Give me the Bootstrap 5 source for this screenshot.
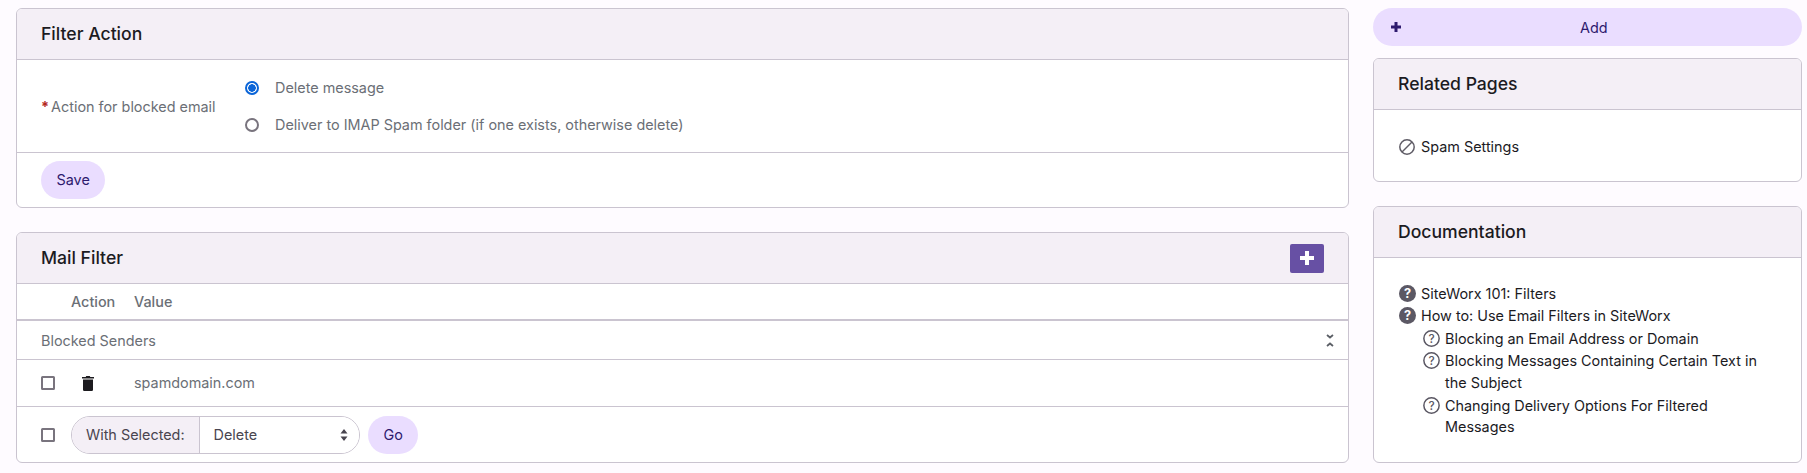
<!DOCTYPE html>
<html lang="en">
<head>
  <meta charset="UTF-8">
  <meta name="viewport" content="width=device-width, initial-scale=1">
  <title>Mail Filter</title>
  <link href="https://cdn.jsdelivr.net/npm/bootstrap@5.3.3/dist/css/bootstrap.min.css" rel="stylesheet">
  <style>
    html, body { height: 473px; }
    body {
      background-color: #fefbff;
      color: #1c1b1f;
      font-family: Inter, "Liberation Sans", sans-serif;
      font-size: 14.4px;
      overflow: hidden;
    }
    .page-wrap { padding: 8px 6px 0 16px; gap: 24px; }
    .main-col { width: 1333px; flex: none; }
    .side-col { width: 429px; flex: none; }
    .box {
      background: #fff;
      border: 1px solid #cac4d0;
      border-radius: 6px;
      overflow: hidden;
    }
    .box-head {
      background: #f4eff6;
      border-bottom: 1px solid #cac4d0;
      height: 51px;
      padding: 1px 24px 0;
      font-size: 17.6px;
      font-weight: 500;
      display: flex;
      align-items: center;
      justify-content: space-between;
    }
    .muted-text { color: #6b6f76; }
    .req { color: #b3261e; font-weight: 700; margin-right: 2px; }
    .action-form { padding: 7px 24px; border-bottom: 1px solid #cac4d0; height: 93px; }
    .action-label { width: 204px; flex: none; padding-top: 1px; }
    .radio-line { height: 37px; gap: 16px; }
    .radio-dot {
      width: 14px; height: 14px; margin: 0;
      border: 2px solid #79747e;
      background: #fff;
    }
    .radio-dot:checked {
      background-color: #fff;
      border: 2px solid #0b65d8;
      background-image: radial-gradient(circle, #0b65d8 0 3.5px, transparent 4px);
    }
    input.form-check-input.check-box {
      width: 14px; height: 14px; margin: 0;
      border: 2px solid #79747e;
      border-radius: 1.5px;
      background: #fff;
    }
    .pill-btn {
      background: #eaddff;
      color: #2e1a6e;
      border: 0;
      border-radius: 19px;
      height: 38px;
      font-size: 14.4px;
      padding: 0 15.5px;
    }
    .pill-btn:hover { background: #e0d0fb; color: #2e1a6e; }
    .add-btn { width: 100%; margin-bottom: 12px; display: flex; align-items: center; padding-left: 18px; }
    .add-btn svg { flex: none; }
    .add-btn span { padding-top: 2px; }
    .save-row { padding: 8px 24px; height: 54px; }
    .plus-btn {
      width: 34px; height: 29px;
      background: #6750a4;
      border: 0;
      border-radius: 2px;
      padding: 0;
      margin-top: -1px;
      display: flex;
      align-items: center;
      justify-content: center;
    }
    .grid-head { height: 37px; border-bottom: 2px solid #cac4d0; padding-left: 54px; font-weight: 500; }
    .grid-head .col-action { width: 63px; }
    .group-row { height: 39px; border-bottom: 1px solid #cac4d0; padding: 1px 14px 0 24px; }
    .data-row { height: 47px; border-bottom: 1px solid #cac4d0; padding-left: 24px; }
    .trash-slot { margin-left: 27px; width: 52px; flex: none; display: flex; }
    .foot-row { height: 55px; padding-left: 24px; gap: 16px; }
    .select-group {
      border: 1px solid #cac4d0;
      border-radius: 19px;
      height: 38px;
      width: 289px;
      overflow: hidden;
      display: flex;
    }
    .select-group .addon {
      background: #f4eff6;
      border-right: 1px solid #cac4d0;
      padding: 0 14px;
      display: flex;
      align-items: center;
      color: #49454f;
    }
    .select-group select {
      flex: 1;
      border: 0;
      border-radius: 0;
      font-size: 14.4px;
      padding: 0 12px 0 14px;
      color: #49454f;
      background-color: #fff;
      background-image: url("data:image/svg+xml,%3csvg xmlns='http://www.w3.org/2000/svg' viewBox='0 0 8 12'%3e%3cpath d='M4 0l3.500 4.500H.5zM4 12L.5 7.500h7z' fill='%2349454f'/%3e%3c/svg%3e");
      background-size: 8px 12px;
      background-position: right 11px center;
      font-family: inherit;
    }
    .go-btn { margin-left: -8px; }
    .side-gap { margin-bottom: 24px; }
    .link-body { padding: 26px 24px 23px 25px; gap: 6px; }
    .doc-list { list-style: none; margin: 0; padding: 0; line-height: 21.6px; }
    .doc-list li { display: flex; gap: 5px; margin-bottom: 1px; }
    .doc-list li:last-child { margin-bottom: 0; }
    .doc-list li.sub { padding-left: 24px; }
    .doc-list svg { flex: none; margin-top: 2px; }
    .doc-list span { flex: 1; padding-right: 4px; }
    .doc-wrap { padding: 25px 24px 24px 25px; }
  </style>
</head>
<body>
<div class="page-wrap d-flex align-items-start">
  <div class="main-col">
    <div class="box mb-4">
      <div class="box-head">Filter Action</div>
      <div class="action-form d-flex align-items-center">
        <div class="action-label muted-text"><span class="req">*</span>Action for blocked email</div>
        <div>
          <label class="radio-line d-flex align-items-center muted-text">
            <input class="form-check-input radio-dot" type="radio" name="act" checked>
            Delete message
          </label>
          <label class="radio-line d-flex align-items-center muted-text">
            <input class="form-check-input radio-dot" type="radio" name="act">
            Deliver to IMAP Spam folder (if one exists, otherwise delete)
          </label>
        </div>
      </div>
      <div class="save-row"><button class="btn pill-btn" type="button">Save</button></div>
    </div>

    <div class="box">
      <div class="box-head">
        Mail Filter
        <button class="btn plus-btn" type="button" aria-label="Add">
          <svg width="14" height="14" viewBox="0 0 14 14"><path d="M5 0h4v5h5v4H9v5H5V9H0V5h5z" fill="#fff"/></svg>
        </button>
      </div>
      <div class="grid-head d-flex align-items-center muted-text">
        <div class="col-action">Action</div>
        <div>Value</div>
      </div>
      <div class="group-row d-flex align-items-center justify-content-between muted-text">
        <span>Blocked Senders</span>
        <svg width="8" height="13" viewBox="0 0 8 13" fill="none" stroke="#5b5f66" stroke-width="1.800"><path d="M1 1l3 2.500L7 1M1 12l3-2.500 3 2.500"/></svg>
      </div>
      <div class="data-row d-flex align-items-center">
        <input class="form-check-input check-box" type="checkbox">
        <div class="trash-slot">
          <svg width="12" height="15" viewBox="0 0 12 15"><path d="M4.200 0h3.600l.5 1H12v1.600H0V1h3.700zM1 3.600h10v10.200a1.200 1.200 0 0 1-1.200 1.200H2.200A1.200 1.200 0 0 1 1 13.800z" fill="#1c1b1f"/></svg>
        </div>
        <span class="muted-text">spamdomain.com</span>
      </div>
      <div class="foot-row d-flex align-items-center">
        <input class="form-check-input check-box" type="checkbox">
        <div class="select-group">
          <div class="addon">With Selected:</div>
          <select class="form-select"><option>Delete</option></select>
        </div>
        <button class="btn pill-btn go-btn" type="button">Go</button>
      </div>
    </div>
  </div>

  <div class="side-col">
    <button class="btn pill-btn add-btn" type="button">
      <svg width="10" height="10" viewBox="0 0 10 10"><path d="M3.500 0h3v3.500H10v3H6.500V10h-3V6.500H0v-3h3.500z" fill="#2e1a6e"/></svg>
      <span class="flex-grow-1 text-center">Add</span>
    </button>

    <div class="box side-gap">
      <div class="box-head">Related Pages</div>
      <div class="link-body d-flex align-items-center">
        <svg width="16" height="16" viewBox="0 0 16 16" fill="none" stroke="#5f5c66" stroke-width="1.500"><circle cx="8" cy="8" r="7.200"/><path d="M3 13L13 3"/></svg>
        <span>Spam Settings</span>
      </div>
    </div>

    <div class="box">
      <div class="box-head">Documentation</div>
      <div class="doc-wrap">
        <ul class="doc-list">
          <li>
            <svg width="17" height="17" viewBox="0 0 16 16"><circle cx="8" cy="8" r="8" fill="#5b5864"/><text x="8" y="12" text-anchor="middle" font-size="12" font-weight="700" fill="#fff" font-family="Inter, sans-serif">?</text></svg>
            <span>SiteWorx 101: Filters</span>
          </li>
          <li>
            <svg width="17" height="17" viewBox="0 0 16 16"><circle cx="8" cy="8" r="8" fill="#5b5864"/><text x="8" y="12" text-anchor="middle" font-size="12" font-weight="700" fill="#fff" font-family="Inter, sans-serif">?</text></svg>
            <span>How to: Use Email Filters in SiteWorx</span>
          </li>
          <li class="sub">
            <svg width="17" height="17" viewBox="0 0 16 16"><circle cx="8" cy="8" r="7.200" fill="none" stroke="#5b5864" stroke-width="1.400"/><text x="8" y="11.800" text-anchor="middle" font-size="11" font-weight="500" fill="#5b5864" font-family="Inter, sans-serif">?</text></svg>
            <span>Blocking an Email Address or Domain</span>
          </li>
          <li class="sub">
            <svg width="17" height="17" viewBox="0 0 16 16"><circle cx="8" cy="8" r="7.200" fill="none" stroke="#5b5864" stroke-width="1.400"/><text x="8" y="11.800" text-anchor="middle" font-size="11" font-weight="500" fill="#5b5864" font-family="Inter, sans-serif">?</text></svg>
            <span>Blocking Messages Containing Certain Text in the Subject</span>
          </li>
          <li class="sub">
            <svg width="17" height="17" viewBox="0 0 16 16"><circle cx="8" cy="8" r="7.200" fill="none" stroke="#5b5864" stroke-width="1.400"/><text x="8" y="11.800" text-anchor="middle" font-size="11" font-weight="500" fill="#5b5864" font-family="Inter, sans-serif">?</text></svg>
            <span>Changing Delivery Options For Filtered Messages</span>
          </li>
        </ul>
      </div>
    </div>
  </div>
</div>
<script src="https://cdn.jsdelivr.net/npm/bootstrap@5.3.3/dist/js/bootstrap.bundle.min.js"></script>
</body>
</html>
